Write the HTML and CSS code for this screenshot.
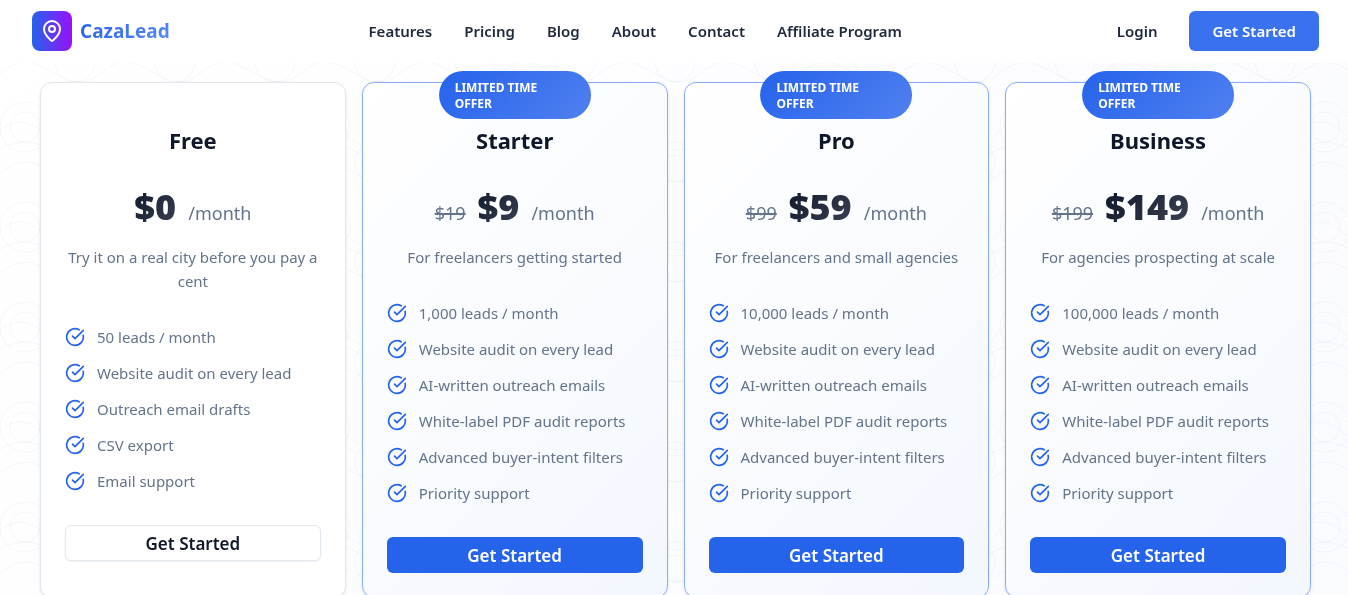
FILE: index.html
```html
<!DOCTYPE html>
<html lang="en">
<head>
    <meta charset="UTF-8">
    <meta name="viewport" content="width=device-width, initial-scale=1.0">
    <title>CazaLead - Pricing</title>
    <link rel="stylesheet" href="styles.css">
</head>
<body>
    <!-- shared icons and background pattern -->
    <svg class="page-pattern" width="100%" height="100%" aria-hidden="true">
        <defs>
            <pattern id="rings" width="100" height="100" patternUnits="userSpaceOnUse">
                <g fill="none" stroke="#1e293b" stroke-opacity="0.035">
                    <circle cx="25" cy="27" r="25"/>
                    <circle cx="25" cy="27" r="15"/>
                    <circle cx="75" cy="62" r="20"/>
                    <path d="M-20 82C-2 82 6 62 25 62S62 82 80 82S106 62 125 62"/>
                    <path d="M0 30C8 24 14 22 20 22C42 22 52 50 80 50C90 50 94 36 100 30"/>
                    <path d="M0 49C18 40 32 40 50 49S82 58 100 49"/>
                </g>
            </pattern>
            <symbol id="check" viewBox="0 0 24 24">
                <path d="M21.801 10A10 10 0 1 1 17 3.335"/>
                <path d="m9 11 3 3L22 4"/>
            </symbol>
        </defs>
        <rect width="100%" height="100%" fill="url(#rings)"/>
    </svg>

    <header class="header">
        <a class="logo" href="#">
            <span class="logo-icon">
                <svg viewBox="0 0 24 24" aria-hidden="true">
                    <path d="M20 10c0 4.993-5.539 10.193-7.399 11.799a1 1 0 0 1-1.202 0C9.539 20.193 4 14.993 4 10a8 8 0 0 1 16 0"/>
                    <circle cx="12" cy="10" r="3"/>
                </svg>
            </span>
            <span class="logo-text">CazaLead</span>
        </a>
        <nav class="nav">
            <a href="#">Features</a>
            <a href="#">Pricing</a>
            <a href="#">Blog</a>
            <a href="#">About</a>
            <a href="#">Contact</a>
            <a href="#">Affiliate Program</a>
        </nav>
        <div class="header-actions">
            <a class="login" href="#">Login</a>
            <button class="btn btn-header">Get Started</button>
        </div>
    </header>

    <main class="plans">
        <section class="card">
            <h3>Free</h3>
            <p class="price"><span class="amount">$0</span><span class="period">/month</span></p>
            <p class="desc">Try it on a real city before you pay a cent</p>
            <ul class="features">
                <li><svg><use href="#check"/></svg>50 leads / month</li>
                <li><svg><use href="#check"/></svg>Website audit on every lead</li>
                <li><svg><use href="#check"/></svg>Outreach email drafts</li>
                <li><svg><use href="#check"/></svg>CSV export</li>
                <li><svg><use href="#check"/></svg>Email support</li>
            </ul>
            <button class="btn btn-outline">Get Started</button>
        </section>

        <section class="card card-offer">
            <span class="badge">LIMITED TIME OFFER</span>
            <h3>Starter</h3>
            <p class="price"><s>$19</s><span class="amount">$9</span><span class="period">/month</span></p>
            <p class="desc">For freelancers getting started</p>
            <ul class="features">
                <li><svg><use href="#check"/></svg>1,000 leads / month</li>
                <li><svg><use href="#check"/></svg>Website audit on every lead</li>
                <li><svg><use href="#check"/></svg>AI-written outreach emails</li>
                <li><svg><use href="#check"/></svg>White-label PDF audit reports</li>
                <li><svg><use href="#check"/></svg>Advanced buyer-intent filters</li>
                <li><svg><use href="#check"/></svg>Priority support</li>
            </ul>
            <button class="btn">Get Started</button>
        </section>

        <section class="card card-offer">
            <span class="badge">LIMITED TIME OFFER</span>
            <h3>Pro</h3>
            <p class="price"><s>$99</s><span class="amount">$59</span><span class="period">/month</span></p>
            <p class="desc">For freelancers and small agencies</p>
            <ul class="features">
                <li><svg><use href="#check"/></svg>10,000 leads / month</li>
                <li><svg><use href="#check"/></svg>Website audit on every lead</li>
                <li><svg><use href="#check"/></svg>AI-written outreach emails</li>
                <li><svg><use href="#check"/></svg>White-label PDF audit reports</li>
                <li><svg><use href="#check"/></svg>Advanced buyer-intent filters</li>
                <li><svg><use href="#check"/></svg>Priority support</li>
            </ul>
            <button class="btn">Get Started</button>
        </section>

        <section class="card card-offer">
            <span class="badge">LIMITED TIME OFFER</span>
            <h3>Business</h3>
            <p class="price"><s>$199</s><span class="amount">$149</span><span class="period">/month</span></p>
            <p class="desc">For agencies prospecting at scale</p>
            <ul class="features">
                <li><svg><use href="#check"/></svg>100,000 leads / month</li>
                <li><svg><use href="#check"/></svg>Website audit on every lead</li>
                <li><svg><use href="#check"/></svg>AI-written outreach emails</li>
                <li><svg><use href="#check"/></svg>White-label PDF audit reports</li>
                <li><svg><use href="#check"/></svg>Advanced buyer-intent filters</li>
                <li><svg><use href="#check"/></svg>Priority support</li>
            </ul>
            <button class="btn">Get Started</button>
        </section>
    </main>
</body>
</html>
```
FILE: styles.css
```css
*{
    padding: 0;
    margin: 0;
    box-sizing: border-box;
}
html{
    scrollbar-width: none;
}
body{
    background: linear-gradient(135deg, #ffffff, #fafbff);
    color: #0f172a;
    font-family: "Noto Sans", "Open Sans", sans-serif;
    font-size: 15px;
    line-height: 24px;
}
a{
    color: inherit;
    text-decoration: none;
}
.page-pattern{
    position: fixed;
    inset: 0;
    z-index: -1;
}

/* header */
.header{
    display: flex;
    justify-content: space-between;
    align-items: center;
    padding: 11px 29px 12px 32px;
    background: rgba(255, 255, 255, 0.9);
    font-weight: 600;
    color: #1e293b;
}
.logo{
    display: flex;
    align-items: center;
    gap: 8px;
}
.logo-icon{
    display: flex;
    align-items: center;
    justify-content: center;
    width: 40px;
    height: 40px;
    border-radius: 8px;
    background: linear-gradient(90deg, #2563eb, #9810fa);
}
.logo-icon svg{
    width: 24px;
    height: 24px;
    fill: none;
    stroke: white;
    stroke-width: 2;
    stroke-linecap: round;
    stroke-linejoin: round;
}
.logo-text{
    font-size: 19px;
    font-weight: 700;
    background: linear-gradient(135deg, #2563eb, #5b8af5);
    background-clip: text;
    -webkit-background-clip: text;
    color: transparent;
}
.nav{
    display: flex;
    gap: 32px;
}
.header-actions{
    display: flex;
    align-items: center;
    gap: 16px;
}
.login{
    padding: 0 16px;
}

/* buttons */
.btn{
    height: 36px;
    border: none;
    border-radius: 6px;
    background: #2563eb;
    color: white;
    font-family: inherit;
    font-size: 17px;
    font-weight: 600;
    cursor: pointer;
}
.btn-header{
    height: 40px;
    padding: 0 23px;
    background: #3a72ed;
    font-size: 15px;
}
.btn-outline{
    background: white;
    border: 1px solid #e2e8f0;
    color: #0f172a;
    box-shadow: 0 1px 2px rgba(0, 0, 0, 0.05);
}

/* pricing cards */
.plans{
    display: grid;
    grid-template-columns: repeat(4, 1fr);
    gap: 16px;
    padding: 19px 37px 19px 40px;
}
.card{
    position: relative;
    display: flex;
    flex-direction: column;
    padding: 40px 24px 24px;
    border: 1px solid #e2e8f0;
    border-radius: 12px;
    background: white;
    box-shadow: 0 1px 3px rgba(0, 0, 0, 0.1);
    text-align: center;
}
.card-offer{
    border-color: #8aacf4;
    background: linear-gradient(135deg, #ffffff, #f3f7fe);
}
.badge{
    position: absolute;
    top: -12px;
    left: 50%;
    transform: translateX(-50%);
    padding: 9px 16px 7px;
    border-radius: 24px;
    background: linear-gradient(135deg, #2563eb, #5080f0);
    color: white;
    font-size: 12px;
    font-weight: 700;
    line-height: 16px;
    text-align: left;
}
.card h3{
    font-size: 22px;
    line-height: 34px;
}
.price{
    display: flex;
    justify-content: center;
    align-items: baseline;
    gap: 12px;
    margin-top: 30px;
    color: #64748b;
    font-size: 18px;
    line-height: 40px;
}
.price s{
    text-decoration-thickness: 2px;
}
.amount{
    font-size: 36px;
    font-weight: 900;
    background: linear-gradient(135deg, #0f172a, #3b4252);
    background-clip: text;
    -webkit-background-clip: text;
    color: transparent;
}
.desc{
    margin-top: 12px;
    color: #64748b;
}
.features{
    display: grid;
    gap: 12px;
    margin: 32px 0;
    list-style: none;
    color: #64748b;
    text-align: left;
}
.features li{
    display: flex;
    align-items: center;
    gap: 12px;
}
.features svg{
    width: 20px;
    height: 20px;
    fill: none;
    stroke: #2563eb;
    stroke-width: 2;
    stroke-linecap: round;
    stroke-linejoin: round;
}
```
